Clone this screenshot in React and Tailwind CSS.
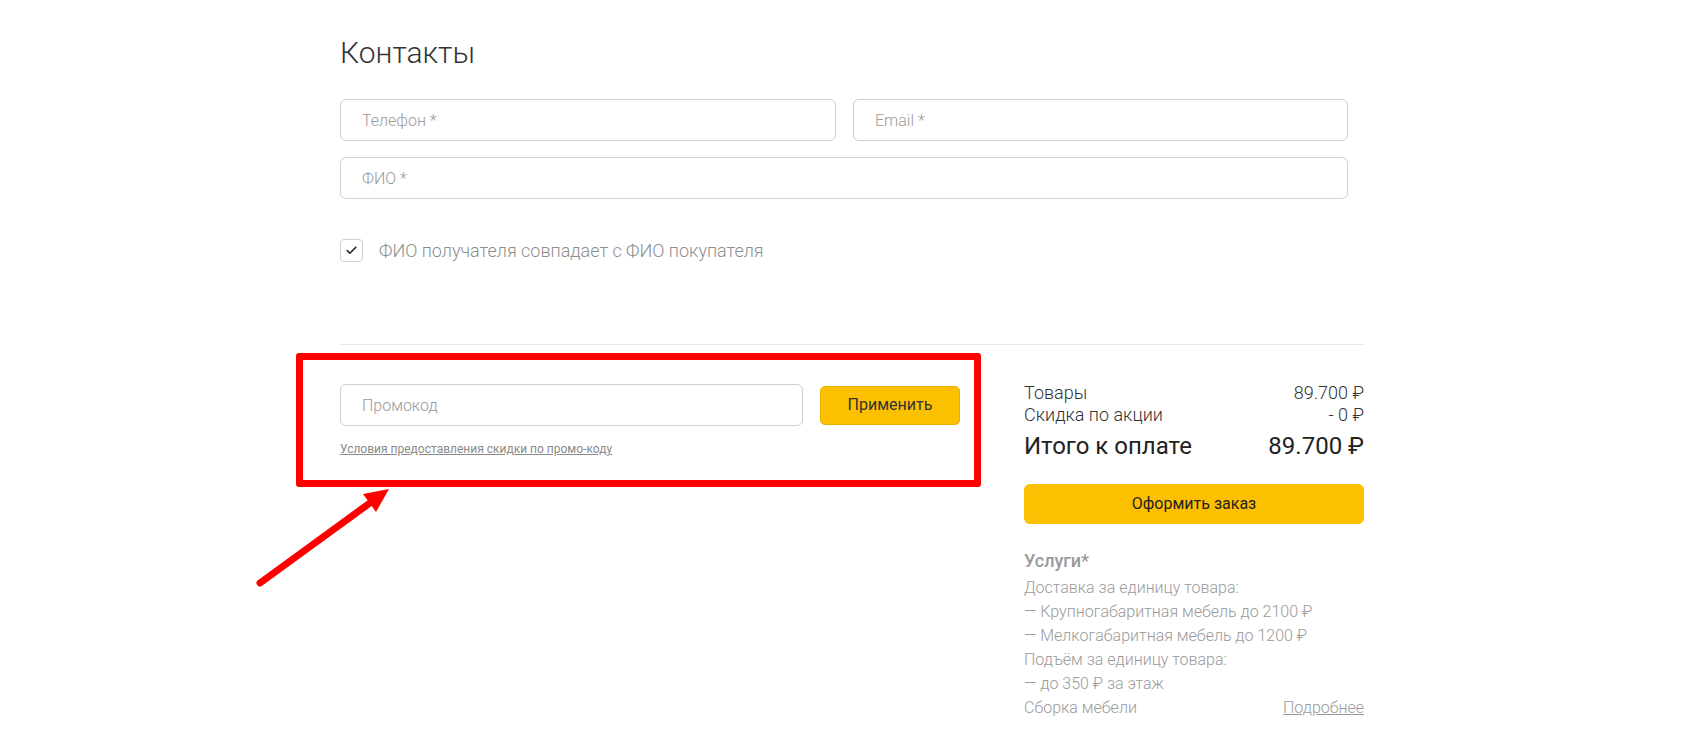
import { Check } from 'lucide-react';

const services = [
  'Доставка за единицу товара:',
  '— Крупногабаритная мебель до 2100 ₽',
  '— Мелкогабаритная мебель до 1200 ₽',
  'Подъём за единицу товара:',
  '— до 350 ₽ за этаж',
];

function Field({ placeholder, className = '' }) {
  return (
    <input
      type="text"
      placeholder={placeholder}
      className={`h-[42px] rounded-[6px] border border-[#cfcfcf] bg-white px-[21px] text-[16px] font-light text-[#333] outline-none placeholder:text-[#9a9a9a] ${className}`}
    />
  );
}

export default function App() {
  return (
    <div className="relative min-h-[736px] bg-white font-['Roboto',sans-serif] text-[#333]">
      <div className="ml-[340px] w-[1024px] pt-[38px]">
        {/* Contacts */}
        <h2 className="text-[30px] font-light leading-[30px] text-[#333]">Контакты</h2>

        <div className="mt-[31px] flex w-[1008px] flex-col gap-[16px]">
          <div className="flex gap-[17px]">
            <Field placeholder="Телефон *" className="w-[496px]" />
            <Field placeholder="Email *" className="w-[495px]" />
          </div>
          <Field placeholder="ФИО *" className="w-full" />
        </div>

        <label className="mt-[40px] flex items-center gap-[16px]">
          <span className="flex h-[23px] w-[23px] items-center justify-center rounded-[4px] border border-[#cfcfcf]">
            <Check size={13} strokeWidth={3} className="text-[#222]" />
          </span>
          <span className="text-[18px] font-light leading-[22px] text-[#8e8e8e]">
            ФИО получателя совпадает с ФИО покупателя
          </span>
        </label>

        <div className="mt-[82px] h-px w-full bg-[#e8e8e8]" />

        {/* Promo + summary */}
        <div className="flex justify-between pt-[37px]">
          <div className="w-[620px] pt-[2px]">
            <div className="flex items-center gap-[17px]">
              <Field placeholder="Промокод" className="w-[463px]" />
              <button className="h-[39px] w-[140px] rounded-[5px] border border-[#e9b200] bg-[#fcc000] text-[16px] font-normal text-[#333]">
                Применить
              </button>
            </div>
            <a href="#" className="mt-[15px] block text-[12px] font-normal leading-[16px] text-[#8a8a8a] underline">
              Условия предоставления скидки по промо-коду
            </a>
          </div>

          <div className="w-[340px]">
            <div className="flex justify-between text-[18px] font-light leading-[22px] text-[#333]">
              <span>Товары</span>
              <span>89.700 ₽</span>
            </div>
            <div className="flex justify-between text-[18px] font-light leading-[22px] text-[#333]">
              <span>Скидка по акции</span>
              <span>- 0 ₽</span>
            </div>
            <div className="mt-[6px] flex justify-between text-[24px] font-normal leading-[28px] text-[#222]">
              <span>Итого к оплате</span>
              <span>89.700 ₽</span>
            </div>
            <button className="mt-[24px] h-[40px] w-full rounded-[6px] bg-[#fcc000] text-[16px] font-normal text-[#222]">
              Оформить заказ
            </button>

            <div className="mt-[26px] text-[18px] font-medium leading-[22px] text-[#9a9a9a]">Услуги*</div>
            <div className="mt-[4px] text-[16px] font-light leading-[24px] text-[#9a9a9a]">
              {services.map((s) => (
                <div key={s}>{s}</div>
              ))}
              <div className="flex justify-between">
                <span>Сборка мебели</span>
                <a href="#" className="underline">Подробнее</a>
              </div>
            </div>
          </div>
        </div>
      </div>

      {/* Annotation overlay */}
      <div className="pointer-events-none absolute left-[296px] top-[353px] h-[134px] w-[685px] rounded-[3px] border-[7px] border-[#ff0000]" />
      <svg
        className="pointer-events-none absolute left-[250px] top-[480px]"
        width="150"
        height="115"
        viewBox="0 0 150 115"
      >
        <line x1="10" y1="103" x2="124" y2="20" stroke="#ff0000" strokeWidth="7" strokeLinecap="round" />
        <polygon points="139,9 126,32 113,14" fill="#ff0000" />
      </svg>
    </div>
  );
}
